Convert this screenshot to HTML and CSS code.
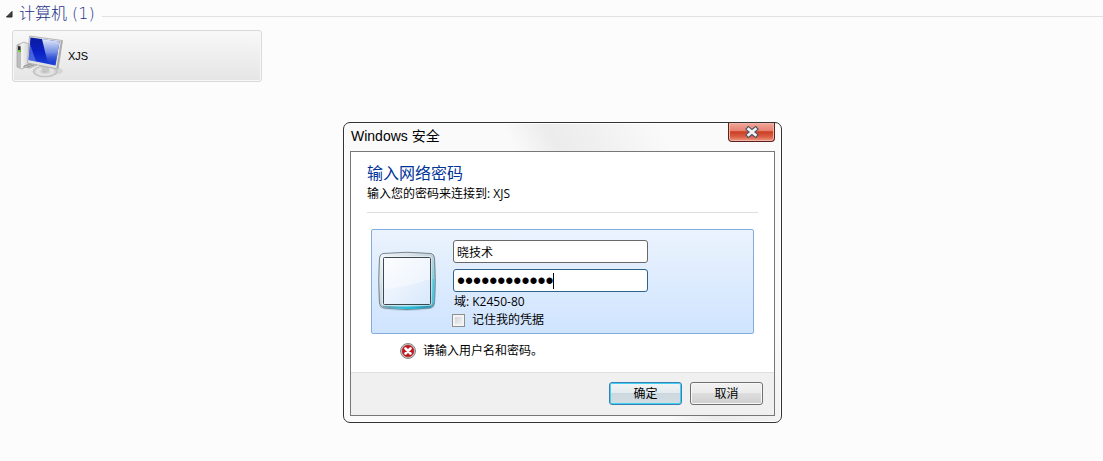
FILE: index.html
```html
<!DOCTYPE html>
<html lang="zh-CN">
<head>
<meta charset="utf-8">
<title>Windows 安全</title>
<link rel="stylesheet" href="styles.css">
</head>
<body>
<main class="explorer">
  <header class="group">
    <svg class="group-arrow" width="7" height="7" viewBox="0 0 7 7" aria-hidden="true"><path d="M6 .5V6H.5Z" fill="#444" stroke="#222" stroke-width="1"/></svg>
    <h1 class="group-title">计算机 (1)</h1>
    <span class="group-line"></span>
  </header>
  <button class="tile" type="button">
    <svg class="tile-icon" width="48" height="44" viewBox="0 0 48 44" aria-hidden="true">
      <defs>
        <linearGradient id="screen" x1="0" y1="0" x2="0" y2="1"><stop offset="0" stop-color="#0b1c9c"/><stop offset=".5" stop-color="#0a1fc4"/><stop offset="1" stop-color="#1a3fd8"/></linearGradient>
        <linearGradient id="glare" x1="0" y1="0" x2="0" y2="1"><stop offset="0" stop-color="#e4ecfb"/><stop offset=".5" stop-color="#86a2ea" stop-opacity=".85"/><stop offset="1" stop-color="#2340d0" stop-opacity=".1"/></linearGradient>
        <linearGradient id="case" x1="0" y1="0" x2="1" y2="0"><stop offset="0" stop-color="#a5a5a5"/><stop offset=".4" stop-color="#f4f4f4"/><stop offset="1" stop-color="#d2d2d2"/></linearGradient>
        <radialGradient id="foot"><stop offset="0" stop-color="#b5b7b9"/><stop offset=".6" stop-color="#e8e8e8"/><stop offset="1" stop-color="#c5c5c5"/></radialGradient>
      </defs>
      <ellipse cx="35" cy="37" rx="12" ry="4" fill="#ccc" opacity=".7"/>
      <path d="M1 11 8 8 13 10V31L6 35 1 33Z" fill="url(#case)" stroke="#a8a8a8" stroke-width=".8"/>
      <path d="M1.500 11.500 5 12.500V34L1.500 32.500Z" fill="#bdbdbd"/>
      <path d="M2 12 4.500 12.500V18L2 17.500Z" fill="#303030"/>
      <path d="M2 16h2.500v2H2z" fill="#63dc23"/>
      <path d="M7 33 14 29 21 31 14 34Z" fill="#ccc" stroke="#999" stroke-width=".6"/>
      <path d="M8 32 16 30M11 33 18 31" stroke="#777" stroke-width=".6"/>
      <ellipse cx="29" cy="37.500" rx="12" ry="5.500" fill="url(#foot)" stroke="#b5b5b5" stroke-width=".6"/>
      <path d="M25 30 34 31 33 37Q29 39 26 36Z" fill="#c5c7c9"/>
      <path d="M13.500 2 46.500 6.500 42 35 11.500 29Z" fill="#e2e2e2" stroke="#a8a8a8" stroke-width=".8"/>
      <path d="M45 6.500 46.500 6.500 42 35 40.500 33.500Z" fill="#a9a9a9"/>
      <path d="M14.500 3.500 43.500 7.500 39.500 31.500 12.500 26Z" fill="url(#screen)"/>
      <path d="M26 5.100 43.500 7.500 39.500 31.500 32 30Z" fill="url(#glare)"/>
      <path d="M14 10 20 27.500 12.500 26Z" fill="#7d9cf0" opacity=".5"/>
    </svg>
    <span class="tile-name">XJS</span>
  </button>
</main>

<section class="dialog" role="dialog" aria-labelledby="dialog-title">
  <header class="titlebar">
    <h2 class="dialog-title" id="dialog-title">Windows 安全</h2>
    <button class="close" type="button" aria-label="关闭">
      <svg width="14" height="12" viewBox="0 0 14 12" aria-hidden="true"><path d="M3.500 3 10.500 9M10.500 3 3.500 9" stroke="#4d5268" stroke-width="4.800" stroke-linecap="square"/><path d="M3.500 3 10.500 9M10.500 3 3.500 9" stroke="#f4f4f4" stroke-width="2.600" stroke-linecap="square"/></svg>
    </button>
  </header>
  <form class="client">
    <div class="content">
      <h3 class="instruction">输入网络密码</h3>
      <p class="detail">输入您的密码来连接到: XJS</p>
      <div class="credential">
        <svg class="avatar" width="60" height="61" viewBox="0 0 60 61" aria-hidden="true">
          <defs>
            <linearGradient id="rim" x1="0" y1="0" x2="1" y2="1"><stop offset="0" stop-color="#f4f8fb"/><stop offset=".5" stop-color="#c5d3dc"/><stop offset=".78" stop-color="#74cfe2"/><stop offset="1" stop-color="#3ba9c4"/></linearGradient>
            <linearGradient id="bottom" x1="0" y1="0" x2="1" y2="0"><stop offset="0" stop-color="#7ca0b0"/><stop offset=".5" stop-color="#22c3e0"/><stop offset="1" stop-color="#338fae"/></linearGradient>
            <linearGradient id="glass" x1="0" y1="0" x2="1" y2="1"><stop offset="0" stop-color="#fafcff"/><stop offset=".5" stop-color="#eaf2fd"/><stop offset="1" stop-color="#d8e8fc"/></linearGradient>
          </defs>
          <path d="M5 3Q30-1 55 3Q58 4 58 8Q60 31 58 53Q58 57 54 58Q30 62 6 58Q2 57 2 53Q0 31 2 8Q2 4 5 3Z" fill="#8ba6b7" opacity=".35"/>
          <path d="M6 2.500Q30 0 54 2.500Q57 3 57.500 7Q59 30 57.500 52Q57 56 53 57Q30 60 7 57Q3 56 2.500 52Q1 30 2.500 7Q3 3 6 2.500Z" fill="url(#rim)" stroke="#77868f"/>
          <path d="M6 55.500Q30 58.500 54 55.500" fill="none" stroke="url(#bottom)" stroke-width="2"/>
          <path d="M56.500 28V52" stroke="#4cc9df" stroke-width="1.500"/>
          <rect x="5.500" y="5.500" width="49" height="49" rx="2" fill="#f4f9fd"/>
          <rect x="6.500" y="6.500" width="47" height="47" rx="1" fill="url(#glass)" stroke="#3d474e"/>
          <path d="M7 7H53V28Q31 36 7 38Z" fill="#fff" opacity=".4"/>
        </svg>
        <div class="fields">
          <input class="field" type="text" value="晓技术" aria-label="用户名">
          <div class="password">
            <input class="field field-active" type="password" value="abcdefghijkl" aria-label="密码">
            <span class="caret"></span>
          </div>
          <p class="domain">域: K2450-80</p>
          <label class="remember"><input class="check" type="checkbox">记住我的凭据</label>
        </div>
      </div>
      <p class="error">
        <svg width="16" height="16" viewBox="0 0 16 16" aria-hidden="true"><circle cx="8" cy="8" r="7.500" fill="#d6d6d6" stroke="#858585"/><circle cx="8" cy="8" r="6" fill="#c5141c" stroke="#a03a3e" stroke-width=".6"/><path d="M5.500 5.500 10.500 10.500M10.500 5.500 5.500 10.500" stroke="#fff" stroke-width="2.600" stroke-linecap="round"/></svg>
        请输入用户名和密码。
      </p>
    </div>
    <footer class="actions">
      <button class="btn btn-default" type="button">确定</button>
      <button class="btn" type="button">取消</button>
    </footer>
  </form>
</section>
</body>
</html>
```

FILE: styles.css
```css
* { box-sizing: border-box; }

body {
  margin: 0;
  background: #fcfcfc;
  color: #000;
  font: 12px/16px "Open Sans", "Noto Sans CJK SC", sans-serif;
}

h1, h2, h3, p { margin: 0; font-weight: 400; }
button, input { font: inherit; color: inherit; }
svg { display: block; flex: none; }

.explorer { padding-top: 4px; }

.group { display: flex; align-items: center; padding-left: 6px; }
.group-title {
  margin: 0 7px 0 6px;
  color: #1e3287;
  font: 300 16px/20px "DejaVu Sans", "Noto Sans CJK SC", sans-serif;
}
.group-line { flex: 1; height: 1px; margin-top: 4px; background: #e2e2e2; }

.tile {
  display: flex;
  align-items: center;
  gap: 4px;
  width: 250px;
  height: 52px;
  margin: 6px 0 0 12px;
  padding: 0 3px;
  border: 1px solid #d9d9d9;
  border-radius: 3px;
  background: linear-gradient(#f8f8f8, #e5e5e5);
  box-shadow: inset 0 0 0 1px #f8f8f8;
}
.tile-name { font: 11px/16px "Liberation Sans", sans-serif; }

.dialog {
  position: absolute;
  top: 122px;
  left: 343px;
  width: 439px;
  padding: 0 6px 6px;
  border: 1px solid #333;
  border-radius: 7px;
  background: linear-gradient(60deg, #fafafa 54%, #ececec 61%, #f0f0f0 68%, #fafafa 80%);
  box-shadow: inset 0 0 0 1px #fff;
}

.titlebar { display: flex; justify-content: space-between; height: 28px; }
.dialog-title {
  padding: 3px 1px;
  font: 14px/20px "Liberation Sans", "Noto Sans CJK SC", sans-serif;
}
.close {
  display: grid;
  place-items: center;
  width: 47px;
  height: 19px;
  padding: 0;
  border: 1px solid #5a201c;
  border-top: 0;
  border-radius: 0 0 4px 4px;
  background: linear-gradient(#f0a79a, #e58070 45%, #ca3c22 48%, #d95c43 75%, #ee9a83);
  box-shadow: inset 0 0 0 1px #f4b3a7;
}

.client { border: 1px solid #777; background: #fff; }
.content { padding: 10px 16px 12px; }
.instruction { color: #003399; font-size: 16px; line-height: 22px; }
.detail { padding-bottom: 8px; border-bottom: 1px solid #dedede; line-height: 20px; }

.credential {
  display: flex;
  align-items: flex-start;
  gap: 15px;
  margin: 16px 4px 0;
  padding: 10px 5px 4px;
  border: 1px solid #84acdd;
  border-radius: 2px;
  background: linear-gradient(#ebf3fd, #cfe4ff);
}
.avatar { margin-top: 11px; }
.fields { display: flex; flex-direction: column; }
.field {
  display: block;
  width: 195px;
  height: 23px;
  margin: 0 0 6px 1px;
  padding: 0 3px;
  border: 1px solid #686868;
  border-radius: 3px;
  background: #fff;
  outline: 0;
}
.password { position: relative; }
.field-active {
  margin-bottom: 1px;
  padding-top: 2px;
  border-color: #2c628b;
  font-family: "Liberation Sans", sans-serif;
  font-size: 23px;
}
.caret { position: absolute; top: 4px; left: 101px; width: 1px; height: 16px; background: #000; }
.domain { padding-left: 2px; line-height: 18px; }
.remember { display: flex; align-items: center; gap: 7px; line-height: 18px; }
.check {
  appearance: none;
  width: 13px;
  height: 13px;
  margin: 0;
  border: 1px solid #8e8f8f;
  background: linear-gradient(135deg, #cbcfd5, #f6f6f6);
  box-shadow: inset 0 0 0 2px #f4f4f4;
}
.error { display: flex; align-items: center; gap: 7px; margin: 8px 0 0 33px; line-height: 18px; }

.actions {
  display: flex;
  justify-content: flex-end;
  gap: 8px;
  padding: 9px 11px 10px;
  border-top: 1px solid #dfdfdf;
  background: #f0f0f0;
}
.btn {
  width: 73px;
  height: 23px;
  padding: 0;
  border: 1px solid #707070;
  border-radius: 3px;
  background: linear-gradient(#f2f2f2, #ebebeb 49%, #dddddd 50%, #cfcfcf);
  box-shadow: inset 0 0 0 1px #f8f8f8;
}
.btn-default {
  border-color: #3c7fb1;
  background: linear-gradient(#f1f4f5, #e3eaee 49%, #ccd8df 50%, #d3dde2);
  box-shadow: inset 0 0 0 1px #3fd0f5;
}
```
